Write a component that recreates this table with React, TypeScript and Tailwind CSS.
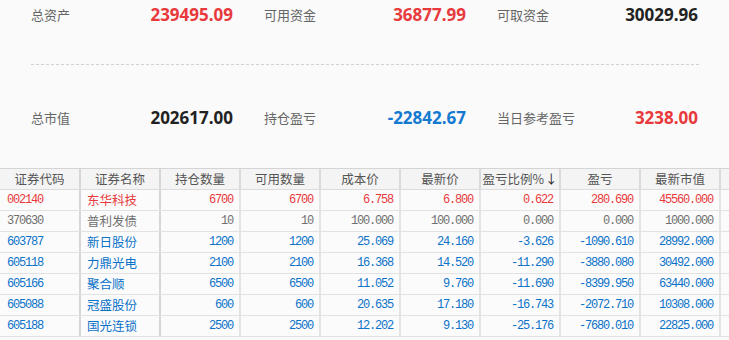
import React from "react";

type Row = {
  code: string;
  name: string;
  hold: string;
  avail: string;
  cost: string;
  price: string;
  ratio: string;
  pl: string;
  value: string;
  tone: "red" | "gray" | "blue";
};

const summary = [
  [
    { label: "总资产", value: "239495.09", color: "text-[#e8393c]" },
    { label: "可用资金", value: "36877.99", color: "text-[#e8393c]" },
    { label: "可取资金", value: "30029.96", color: "text-[#222222]" },
  ],
  [
    { label: "总市值", value: "202617.00", color: "text-[#222222]" },
    { label: "持仓盈亏", value: "-22842.67", color: "text-[#1479d1]" },
    { label: "当日参考盈亏", value: "3238.00", color: "text-[#e8393c]" },
  ],
];

const rows: Row[] = [
  { code: "002140", name: "东华科技", hold: "6700", avail: "6700", cost: "6.758", price: "6.800", ratio: "0.622", pl: "280.690", value: "45560.000", tone: "red" },
  { code: "370630", name: "普利发债", hold: "10", avail: "10", cost: "100.000", price: "100.000", ratio: "0.000", pl: "0.000", value: "1000.000", tone: "gray" },
  { code: "603787", name: "新日股份", hold: "1200", avail: "1200", cost: "25.069", price: "24.160", ratio: "-3.626", pl: "-1090.610", value: "28992.000", tone: "blue" },
  { code: "605118", name: "力鼎光电", hold: "2100", avail: "2100", cost: "16.368", price: "14.520", ratio: "-11.290", pl: "-3880.080", value: "30492.000", tone: "blue" },
  { code: "605166", name: "聚合顺", hold: "6500", avail: "6500", cost: "11.052", price: "9.760", ratio: "-11.690", pl: "-8399.950", value: "63440.000", tone: "blue" },
  { code: "605088", name: "冠盛股份", hold: "600", avail: "600", cost: "20.635", price: "17.180", ratio: "-16.743", pl: "-2072.710", value: "10308.000", tone: "blue" },
  { code: "605188", name: "国光连锁", hold: "2500", avail: "2500", cost: "12.202", price: "9.130", ratio: "-25.176", pl: "-7680.010", value: "22825.000", tone: "blue" },
];

const toneClass = {
  red: "text-[#e8393c]",
  gray: "text-[#6f6f6f]",
  blue: "text-[#0b72c9]",
};

const headers = ["持仓数量", "可用数量", "成本价", "最新价", "盈亏比例%", "盈亏", "最新市值"];

const gridCols = "grid grid-cols-[81px_80px_80px_80px_80px_80px_80px_80px_80px_1fr]";
const cjk = "font-['Noto_Sans_CJK_SC','Noto_Sans',sans-serif]";
const mono = "font-['Liberation_Mono','Noto_Sans_CJK_SC',monospace] text-[12px] tracking-[-1.2px]";

function SummaryRow({ items }: { items: { label: string; value: string; color: string }[] }) {
  return (
    <div className="grid grid-cols-[233px_233px_1fr] h-[30px] pl-[31px]">
      {items.map((it) => (
        <div key={it.label} className="flex items-center justify-between pr-[31px]">
          <span className={`${cjk} text-[13px] text-[#666666]`}>{it.label}</span>
          <span className={`font-['Noto_Sans',sans-serif] font-bold text-[17px] ${it.color}`}>{it.value}</span>
        </div>
      ))}
    </div>
  );
}

export default function App() {
  return (
    <div className="w-[729px] h-[340px] bg-[#fafafa] overflow-hidden">
      <SummaryRow items={summary[0]} />
      <div className="mt-[34px] ml-[31px] w-[668px] border-t border-dashed border-[#d2d2d2]" />
      <div className="mt-[38px]">
        <SummaryRow items={summary[1]} />
      </div>

      <div className="mt-[35px] border-t border-[#d4d4d4]">
        <div className={`${gridCols} h-[21px] bg-[#f4f4f4] border-b border-[#dcdcdc] ${cjk} text-[12.5px] text-[#555555]`}>
          <div className="flex items-center justify-center border-r-2 border-[#d6d6d6]">证券代码</div>
          <div className="flex items-center justify-center border-r-2 border-[#d6d6d6]">证券名称</div>
          {headers.map((h) => (
            <div key={h} className="flex items-center justify-center border-r-2 border-[#dadada]">
              {h}
              {h === "盈亏比例%" && <span className="ml-[1px] text-[#222222]">↓</span>}
            </div>
          ))}
          <div />
        </div>
        {rows.map((r) => (
          <div key={r.code} className={`${gridCols} h-[21px] bg-[#fbfbfb] border-b border-[#e2e2e2] ${toneClass[r.tone]}`}>
            <div className={`flex items-center pl-[7px] border-r-2 border-[#d6d6d6] ${mono}`}>{r.code}</div>
            <div className={`flex items-center pl-[6px] border-r-2 border-[#d6d6d6] ${cjk} text-[12.5px]`}>{r.name}</div>
            {[r.hold, r.avail, r.cost, r.price, r.ratio, r.pl, r.value].map((v, i) => (
              <div key={i} className={`flex items-center justify-end pr-[6px] border-r-2 border-[#e4e4e4] ${mono}`}>{v}</div>
            ))}
            <div />
          </div>
        ))}
      </div>
    </div>
  );
}
